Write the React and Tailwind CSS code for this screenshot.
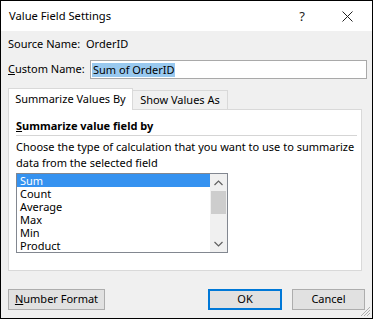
import React from "react";

const font = { fontFamily: '"Noto Sans", "Open Sans", Arial, sans-serif' };

export default function App() {
  const items = ["Sum", "Count", "Average", "Max", "Min", "Product"];
  return (
    <div
      className="relative w-[373px] h-[319px] border border-black bg-[#f0f0f0] flex flex-col text-[11px] text-black overflow-hidden"
      style={font}
    >
      {/* title bar */}
      <div className="h-[30px] bg-white flex items-center pl-[8px] shrink-0">
        <span className="text-[11.2px] leading-none">Value Field Settings</span>
        <span className="ml-auto text-[13px] leading-none mr-[37px] text-[#222]">?</span>
        <svg width="11" height="11" viewBox="0 0 11 11" className="mr-[19px]">
          <path d="M0.5 0.5 L10.5 10.5 M10.5 0.5 L0.5 10.5" stroke="#222" strokeWidth="1" />
        </svg>
      </div>

      {/* body */}
      <div className="flex flex-col pl-[7px] pt-[5px]">
        <div className="flex items-center h-[16px]">
          <span className="w-[78px]">Source Name:</span>
          <span>OrderID</span>
        </div>
        <div className="flex items-center mt-[8px] h-[19px]">
          <span className="w-[82px]">
            <span className="underline">C</span>ustom Name:
          </span>
          <div className="w-[277px] h-[19px] bg-white border border-[#a9a9a9] flex items-center px-[1px]">
            <span className="bg-[#99c9ef] leading-[14px] px-[1px]">Sum of OrderID</span>
          </div>
        </div>

        {/* tabs */}
        <div className="flex items-end mt-[8px] h-[22px] w-[354px]">
          <div className="w-[125px] h-[22px] bg-white border border-b-0 border-[#d9d9d9] flex items-center justify-center relative z-10 -mb-px pb-[1px]">
            Summarize Values By
          </div>
          <div className="w-[95px] h-[19px] bg-[#f0f0f0] border border-l-0 border-b-0 border-[#d9d9d9] flex items-center justify-center">
            Show Values As
          </div>
        </div>

        {/* panel */}
        <div className="w-[354px] h-[162px] bg-white border border-[#d9d9d9] flex flex-col pl-[7px] pt-[8px]">
          <div className="font-bold leading-[16px]">
            <span className="underline">S</span>ummarize value field by
          </div>
          <div className="h-px bg-[#d5d5d5] w-[341px] mt-[1px]" />
          <div className="leading-[16px] mt-[3px] w-[345px]">
            Choose the type of calculation that you want to use to summarize data from the selected field
          </div>
          <div className="w-[212px] h-[80px] border border-[#828790] mt-[2px] flex bg-white">
            <div className="flex-1 flex flex-col">
              {items.map((it, i) => (
                <div
                  key={it}
                  className={
                    i === 0
                      ? "h-[13px] leading-[13px] pl-[3px] bg-[#3592f0] text-white"
                      : "h-[13px] leading-[13px] pl-[3px]"
                  }
                >
                  {it}
                </div>
              ))}
            </div>
            <div className="w-[17px] bg-[#f0f0f0] flex flex-col items-center">
              <div className="h-[17px] flex items-center justify-center">
                <svg width="9" height="6" viewBox="0 0 9 6">
                  <path d="M0.5 5 L4.5 1 L8.5 5" stroke="#606060" strokeWidth="1.2" fill="none" />
                </svg>
              </div>
              <div className="w-[15px] h-[23px] bg-[#cdcdcd]" />
              <div className="flex-1" />
              <div className="h-[17px] flex items-center justify-center">
                <svg width="9" height="6" viewBox="0 0 9 6">
                  <path d="M0.5 1 L4.5 5 L8.5 1" stroke="#606060" strokeWidth="1.2" fill="none" />
                </svg>
              </div>
            </div>
          </div>
        </div>

        {/* buttons */}
        <div className="flex mt-[18px] w-[357px]">
          <div className="w-[97px] h-[21px] bg-[#e1e1e1] border border-[#adadad] flex items-center justify-center">
            <span><span className="underline">N</span>umber Format</span>
          </div>
          <div className="ml-auto w-[74px] h-[21px] bg-[#e1e1e1] border-2 border-[#0078d7] flex items-center justify-center">
            OK
          </div>
          <div className="ml-[10px] w-[73px] h-[21px] bg-[#e1e1e1] border border-[#adadad] flex items-center justify-center">
            Cancel
          </div>
        </div>
      </div>

      {/* resize grip */}
      <svg width="10" height="10" viewBox="0 0 10 10" className="absolute right-[1px] bottom-[1px]">
        <path d="M9 3 L3 9 M9 6 L6 9 M9 0 L0 9" stroke="#b0b0b0" strokeWidth="1" />
      </svg>
    </div>
  );
}
